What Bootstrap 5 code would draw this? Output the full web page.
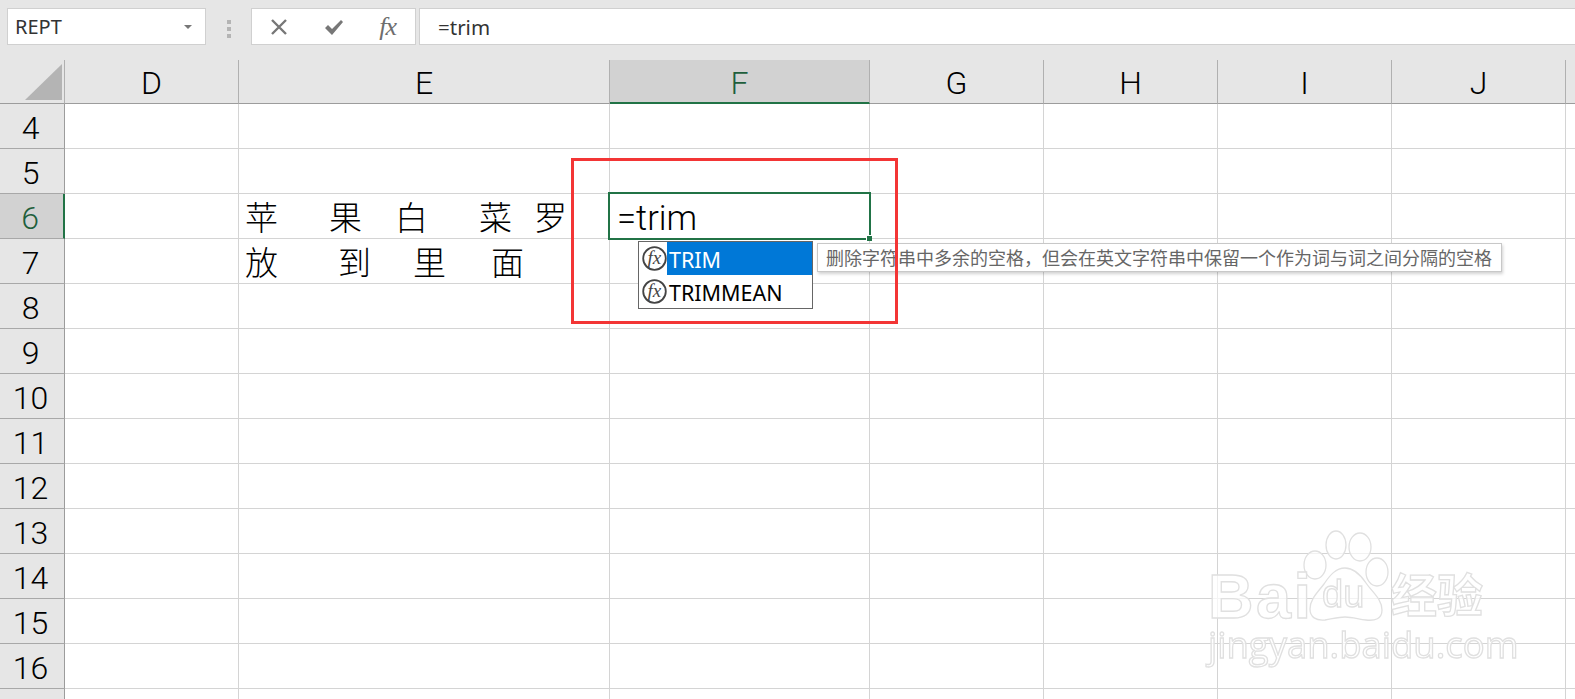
<!DOCTYPE html>
<html lang="zh-CN">
<head>
<meta charset="utf-8">
<title>Excel TRIM</title>
<link rel="stylesheet" href="https://cdn.jsdelivr.net/npm/bootstrap@5.3.0/dist/css/bootstrap.min.css">
<style>
html,body{height:699px;overflow:hidden;background:#fff}
body{position:relative;font-family:"Noto Sans","Noto Sans CJK SC",sans-serif;color:#000}
.topband{height:60px;background:#e6e6e6;padding:8px 0 0 7px;gap:0}
.namebox{width:199px;height:37px;background:#fff;border:1px solid #d0d0d0;padding:0 7px;font-size:20px;line-height:35px;color:#333}
.namebox::after{content:"";margin-right:6px;border-left:4px solid transparent;border-right:4px solid transparent;border-top:4px solid #777}
.grip{width:45px;gap:3px}
.grip i{display:block;width:4px;height:4px;background:#b4b4b4}
.fxbox{width:165px;height:37px;background:#fff;border:1px solid #d0d0d0;padding:0 19px 0 18px}
.fxtext{font:italic 400 26px/1 "Liberation Serif",serif;color:#6e6e6e;letter-spacing:-1px}
.fxinput{flex:1;height:37px;margin-left:3px;background:#fff;border:1px solid #d0d0d0;border-right:0;padding-left:18px;font-size:20.5px;line-height:36px;color:#333}
.sheet{border-collapse:separate;border-spacing:0;table-layout:fixed;width:1575px}
.sheet th,.sheet td{padding:0;box-sizing:border-box;border-right:1px solid #d4d4d4;border-bottom:1px solid #d4d4d4;height:45px;overflow:visible;white-space:nowrap}
.sheet .colhead th{height:44px;background:#e6e6e6;border-right:1px solid #b0b0b0;border-bottom:1px solid #9c9c9c;font-family:Roboto,sans-serif;font-weight:300;font-size:32px;line-height:1;text-align:center;padding-top:3px}
.sheet .colhead th:last-child{border-right:0}
.sheet tbody th{background:#e6e6e6;font-family:Roboto,sans-serif;font-weight:300;font-size:32px;line-height:1;text-align:center;border-right:1px solid #9c9c9c;border-bottom:1px solid #a8a8a8;padding:3px 3px 0 0}
.sheet .colhead .cornercell{padding:0;position:relative}
.corner{position:absolute;left:25px;top:4px}
.sheet .colhead .activecol{background:#d2d2d2;color:#1e5f3c;border-bottom:2px solid #217346}
.sheet tbody .activerow{background:#d2d2d2;color:#1e5f3c;border-right:2px solid #217346}
.sheet td.lastcol{border-right:0}
.glyphs{display:flex;font-family:"Noto Sans CJK SC",sans-serif;font-weight:300;font-size:33px;line-height:44px;padding-left:6px}
.glyphs span{display:block;width:33px;flex:none}
.g1{margin-left:51px}.g2{margin-left:33px}.g3{margin-left:51px}.g4{margin-left:22px}
.g5{margin-left:60px}.g6{margin-left:42px}.g7{margin-left:45px}
.lastrow th,.lastrow td{height:11px!important;border-bottom:0!important}
.cellfx{position:absolute;left:608px;top:192px;width:263px;height:48px;border:2px solid #217346;background:#fff;font-family:Roboto,sans-serif;font-weight:300;font-size:34.5px;line-height:48px;padding-left:7px;z-index:2}
.fillh{position:absolute;right:-3px;bottom:-3px;width:6px;height:6px;background:#217346;border-left:1px solid #fff;border-top:1px solid #fff}
.acbox{position:absolute;left:638px;top:241px;width:175px;height:68px;background:#fff;border:1px solid #666;z-index:3;padding:0}
.acrow{height:33px;display:flex;align-items:center;font-size:21.5px;line-height:1}
.acrow svg{flex:none;margin:0 0 0 3px}
.acname{flex:1;height:33px;line-height:35px;padding-left:2px}
.acsel{background:#0078d7;color:#fff}
.fxgl{font:italic 400 19px "Liberation Serif",serif;fill:#444}
.tipbox{position:absolute;left:817px;top:243px;width:685px;height:29px;background:#fff;border:1px solid #c8c8c8;box-shadow:1px 2px 3px rgba(0,0,0,.18);z-index:3;font-family:"Noto Sans CJK SC",sans-serif;font-size:18px;line-height:26px;padding-left:8px;color:#666;white-space:nowrap}
.redframe{position:absolute;left:571px;top:158px;width:327px;height:166px;border:3px solid #f33535;z-index:4;pointer-events:none}
.wmark{position:absolute;left:1200px;top:525px;width:300px;height:150px;z-index:1;pointer-events:none;filter:blur(.6px)}
.wtext{position:absolute;color:rgba(255,255,255,.75);-webkit-text-stroke:1.3px #e0e0e0;white-space:nowrap}
.wbai{left:8px;top:44px;font:700 63px/54px "Liberation Sans",sans-serif;letter-spacing:2.5px}
.wdu{left:122px;top:50px;font:400 38px/1 "Liberation Sans",sans-serif}
.wjing{left:8px;top:101px;font:400 36.5px/1 "Open Sans",sans-serif}
.wcn{left:191px;top:44px;font:700 46px/1 "Noto Sans CJK SC",sans-serif}
.wpaw{position:absolute;left:100px;top:5px}
</style>
</head>
<body>
<div class="topband d-flex align-items-start">
  <div class="namebox d-flex justify-content-between align-items-center">REPT</div>
  <div class="grip d-flex flex-column align-items-center pt-2 mt-1"><i></i><i></i><i></i></div>
  <div class="fxbox d-flex justify-content-between align-items-center">
    <svg width="18" height="18" viewBox="0 0 18 18"><path d="M2 2L16 16M16 2L2 16" stroke="#777" stroke-width="2.4" fill="none"/></svg>
    <svg width="20" height="18" viewBox="0 0 20 18"><path d="M1 10l3-3 4 4L17 2l2 2L8 17z" fill="#777"/></svg>
    <span class="fxtext">fx</span>
  </div>
  <div class="fxinput">=trim</div>
</div>

<table class="sheet">
  <colgroup><col style="width:65px"><col style="width:174px"><col style="width:371px"><col style="width:260px"><col style="width:174px"><col style="width:174px"><col style="width:174px"><col style="width:174px"><col style="width:9px"></colgroup>
  <thead>
    <tr class="colhead">
      <th class="cornercell"><svg class="corner" width="37" height="37" viewBox="0 0 37 37"><path d="M37 0V36H0z" fill="#b4b4b4"/></svg></th>
      <th>D</th><th>E</th><th class="activecol">F</th><th>G</th><th>H</th><th>I</th><th>J</th><th></th>
    </tr>
  </thead>
  <tbody>
    <tr><th>4</th><td></td><td></td><td></td><td></td><td></td><td></td><td></td><td class="lastcol"></td></tr>
    <tr><th>5</th><td></td><td></td><td></td><td></td><td></td><td></td><td></td><td class="lastcol"></td></tr>
    <tr><th class="activerow">6</th><td></td><td><div class="glyphs"><span>苹</span><span class="g1">果</span><span class="g2">白</span><span class="g3">菜</span><span class="g4">罗</span></div></td><td></td><td></td><td></td><td></td><td></td><td class="lastcol"></td></tr>
    <tr><th>7</th><td></td><td><div class="glyphs"><span>放</span><span class="g5">到</span><span class="g6">里</span><span class="g7">面</span></div></td><td></td><td></td><td></td><td></td><td></td><td class="lastcol"></td></tr>
    <tr><th>8</th><td></td><td></td><td></td><td></td><td></td><td></td><td></td><td class="lastcol"></td></tr>
    <tr><th>9</th><td></td><td></td><td></td><td></td><td></td><td></td><td></td><td class="lastcol"></td></tr>
    <tr><th>10</th><td></td><td></td><td></td><td></td><td></td><td></td><td></td><td class="lastcol"></td></tr>
    <tr><th>11</th><td></td><td></td><td></td><td></td><td></td><td></td><td></td><td class="lastcol"></td></tr>
    <tr><th>12</th><td></td><td></td><td></td><td></td><td></td><td></td><td></td><td class="lastcol"></td></tr>
    <tr><th>13</th><td></td><td></td><td></td><td></td><td></td><td></td><td></td><td class="lastcol"></td></tr>
    <tr><th>14</th><td></td><td></td><td></td><td></td><td></td><td></td><td></td><td class="lastcol"></td></tr>
    <tr><th>15</th><td></td><td></td><td></td><td></td><td></td><td></td><td></td><td class="lastcol"></td></tr>
    <tr><th>16</th><td></td><td></td><td></td><td></td><td></td><td></td><td></td><td class="lastcol"></td></tr>
    <tr class="lastrow"><th></th><td></td><td></td><td></td><td></td><td></td><td></td><td></td><td class="lastcol"></td></tr>
  </tbody>
</table>

<div class="cellfx">=trim<span class="fillh"></span></div>

<div class="acbox">
  <div class="acrow">
    <svg width="25" height="25" viewBox="0 0 25 25"><circle cx="12.5" cy="12.5" r="11.3" fill="#fff" stroke="#444" stroke-width="1.8"/><text x="5.5" y="18" class="fxgl">fx</text></svg>
    <div class="acname acsel">TRIM</div>
  </div>
  <div class="acrow">
    <svg width="25" height="25" viewBox="0 0 25 25"><circle cx="12.5" cy="12.5" r="11.3" fill="#fff" stroke="#444" stroke-width="1.8"/><text x="5.5" y="18" class="fxgl">fx</text></svg>
    <div class="acname">TRIMMEAN</div>
  </div>
</div>

<div class="tipbox">删除字符串中多余的空格，但会在英文字符串中保留一个作为词与词之间分隔的空格</div>

<div class="redframe"></div>

<div class="wmark">
  <svg class="wpaw" width="110" height="100" viewBox="0 0 110 100" fill="rgba(255,255,255,.7)" stroke="#e0e0e0" stroke-width="1.3">
    <ellipse cx="15" cy="35" rx="11" ry="14"/>
    <ellipse cx="36" cy="15" rx="10" ry="14"/>
    <ellipse cx="60" cy="17" rx="11" ry="14"/>
    <ellipse cx="77" cy="42" rx="11" ry="14"/>
    <path d="M45 38c9 0 15 6 21 15 6 9 16 16 16 27 0 9-7 11-16 10-8-1-14-3-21-3s-13 2-20 3c-9 1-15-3-15-11 0-10 8-17 14-25 6-9 12-16 21-16z"/>
  </svg>
  <span class="wtext wbai">Bai</span>
  <span class="wtext wdu">du</span>
  <span class="wtext wcn">经验</span>
  <span class="wtext wjing">jingyan.baidu.com</span>
</div>

<script src="https://cdn.jsdelivr.net/npm/bootstrap@5.3.0/dist/js/bootstrap.bundle.min.js"></script>
</body>
</html>
